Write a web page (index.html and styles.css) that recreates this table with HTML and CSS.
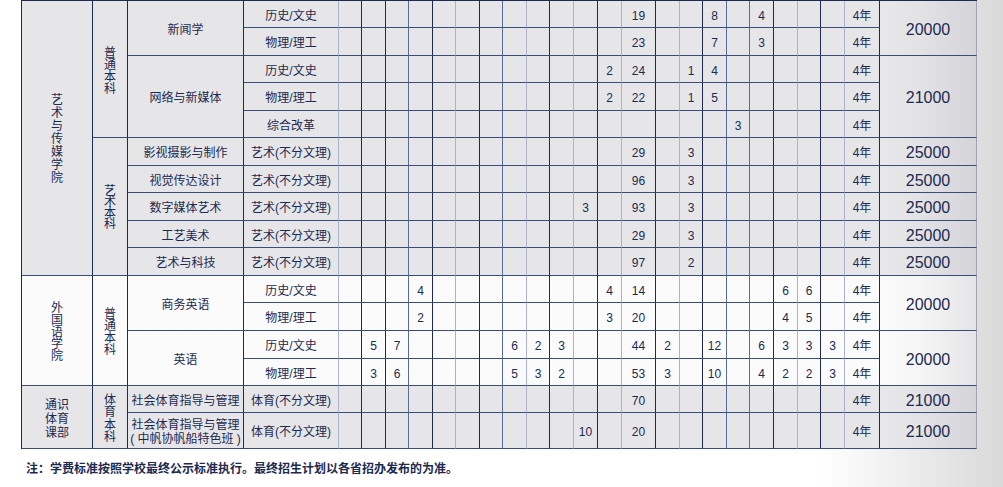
FILE: index.html
```html
<!DOCTYPE html>
<html lang="zh-CN">
<head>
<meta charset="utf-8">
<title>招生计划</title>
<link rel="stylesheet" href="styles.css">
</head>
<body>
<div class="page">
  <div class="sec s1">
    <!-- R1 -->
    <div class="c rs10"><span class="vt v13">艺术与传媒学院</span></div>
    <div class="c rs5"><span class="vt v12">普通本科</span></div>
    <div class="c rs2">新闻学</div>
    <div class="c l">历史/文史</div>
    <div class="c"></div><div class="c"></div><div class="c m"></div><div class="c"></div><div class="c l"></div><div class="c"></div><div class="c m"></div><div class="c l"></div><div class="c"></div><div class="c l"></div><div class="c"></div><div class="c l"></div><div class="c">19</div><div class="c l"></div><div class="c"></div><div class="c m">8</div><div class="c m"></div><div class="c">4</div><div class="c l"></div><div class="c"></div><div class="c l"></div><div class="c">4年</div>
    <div class="c t rs2">20000</div>
    <!-- R2 -->
    <div class="c l">物理/理工</div>
    <div class="c"></div><div class="c"></div><div class="c m"></div><div class="c"></div><div class="c l"></div><div class="c"></div><div class="c m"></div><div class="c l"></div><div class="c"></div><div class="c l"></div><div class="c"></div><div class="c l"></div><div class="c">23</div><div class="c l"></div><div class="c"></div><div class="c m">7</div><div class="c m"></div><div class="c">3</div><div class="c l"></div><div class="c"></div><div class="c l"></div><div class="c">4年</div>
    <!-- R3 -->
    <div class="c rs3">网络与新媒体</div>
    <div class="c l">历史/文史</div>
    <div class="c"></div><div class="c"></div><div class="c m"></div><div class="c"></div><div class="c l"></div><div class="c"></div><div class="c m"></div><div class="c l"></div><div class="c"></div><div class="c l"></div><div class="c"></div><div class="c l">2</div><div class="c">24</div><div class="c l"></div><div class="c">1</div><div class="c m">4</div><div class="c m"></div><div class="c"></div><div class="c l"></div><div class="c"></div><div class="c l"></div><div class="c">4年</div>
    <div class="c t rs3">21000</div>
    <!-- R4 -->
    <div class="c l">物理/理工</div>
    <div class="c"></div><div class="c"></div><div class="c m"></div><div class="c"></div><div class="c l"></div><div class="c"></div><div class="c m"></div><div class="c l"></div><div class="c"></div><div class="c l"></div><div class="c"></div><div class="c l">2</div><div class="c">22</div><div class="c l"></div><div class="c">1</div><div class="c m">5</div><div class="c m"></div><div class="c"></div><div class="c l"></div><div class="c"></div><div class="c l"></div><div class="c">4年</div>
    <!-- R5 -->
    <div class="c l">综合改革</div>
    <div class="c"></div><div class="c"></div><div class="c m"></div><div class="c"></div><div class="c l"></div><div class="c"></div><div class="c m"></div><div class="c l"></div><div class="c"></div><div class="c l"></div><div class="c"></div><div class="c l"></div><div class="c"></div><div class="c l"></div><div class="c"></div><div class="c m"></div><div class="c m">3</div><div class="c"></div><div class="c l"></div><div class="c"></div><div class="c l"></div><div class="c">4年</div>
    <!-- R6 -->
    <div class="c rs5"><span class="vt v11">艺术本科</span></div>
    <div class="c">影视摄影与制作</div>
    <div class="c l">艺术(不分文理)</div>
    <div class="c"></div><div class="c"></div><div class="c m"></div><div class="c"></div><div class="c l"></div><div class="c"></div><div class="c m"></div><div class="c l"></div><div class="c"></div><div class="c l"></div><div class="c"></div><div class="c l"></div><div class="c">29</div><div class="c l"></div><div class="c">3</div><div class="c m"></div><div class="c m"></div><div class="c"></div><div class="c l"></div><div class="c"></div><div class="c l"></div><div class="c">4年</div>
    <div class="c t">25000</div>
    <!-- R7 -->
    <div class="c">视觉传达设计</div>
    <div class="c l">艺术(不分文理)</div>
    <div class="c"></div><div class="c"></div><div class="c m"></div><div class="c"></div><div class="c l"></div><div class="c"></div><div class="c m"></div><div class="c l"></div><div class="c"></div><div class="c l"></div><div class="c"></div><div class="c l"></div><div class="c">96</div><div class="c l"></div><div class="c">3</div><div class="c m"></div><div class="c m"></div><div class="c"></div><div class="c l"></div><div class="c"></div><div class="c l"></div><div class="c">4年</div>
    <div class="c t">25000</div>
    <!-- R8 -->
    <div class="c">数字媒体艺术</div>
    <div class="c l">艺术(不分文理)</div>
    <div class="c"></div><div class="c"></div><div class="c m"></div><div class="c"></div><div class="c l"></div><div class="c"></div><div class="c m"></div><div class="c l"></div><div class="c"></div><div class="c l"></div><div class="c">3</div><div class="c l"></div><div class="c">93</div><div class="c l"></div><div class="c">3</div><div class="c m"></div><div class="c m"></div><div class="c"></div><div class="c l"></div><div class="c"></div><div class="c l"></div><div class="c">4年</div>
    <div class="c t">25000</div>
    <!-- R9 -->
    <div class="c">工艺美术</div>
    <div class="c l">艺术(不分文理)</div>
    <div class="c"></div><div class="c"></div><div class="c m"></div><div class="c"></div><div class="c l"></div><div class="c"></div><div class="c m"></div><div class="c l"></div><div class="c"></div><div class="c l"></div><div class="c"></div><div class="c l"></div><div class="c">29</div><div class="c l"></div><div class="c">3</div><div class="c m"></div><div class="c m"></div><div class="c"></div><div class="c l"></div><div class="c"></div><div class="c l"></div><div class="c">4年</div>
    <div class="c t">25000</div>
    <!-- R10 -->
    <div class="c">艺术与科技</div>
    <div class="c l">艺术(不分文理)</div>
    <div class="c"></div><div class="c"></div><div class="c m"></div><div class="c"></div><div class="c l"></div><div class="c"></div><div class="c m"></div><div class="c l"></div><div class="c"></div><div class="c l"></div><div class="c"></div><div class="c l"></div><div class="c">97</div><div class="c l"></div><div class="c">2</div><div class="c m"></div><div class="c m"></div><div class="c"></div><div class="c l"></div><div class="c"></div><div class="c l"></div><div class="c">4年</div>
    <div class="c t">25000</div>
  </div>

  <div class="sec s2">
    <!-- R11 -->
    <div class="c rs4"><span class="vt v12">外国语学院</span></div>
    <div class="c rs4"><span class="vt v12">普通本科</span></div>
    <div class="c rs2">商务英语</div>
    <div class="c l">历史/文史</div>
    <div class="c"></div><div class="c"></div><div class="c m"></div><div class="c">4</div><div class="c l"></div><div class="c"></div><div class="c m"></div><div class="c l"></div><div class="c"></div><div class="c l"></div><div class="c"></div><div class="c l">4</div><div class="c">14</div><div class="c l"></div><div class="c"></div><div class="c m"></div><div class="c m"></div><div class="c"></div><div class="c l">6</div><div class="c">6</div><div class="c l"></div><div class="c">4年</div>
    <div class="c t rs2">20000</div>
    <!-- R12 -->
    <div class="c l">物理/理工</div>
    <div class="c"></div><div class="c"></div><div class="c m"></div><div class="c">2</div><div class="c l"></div><div class="c"></div><div class="c m"></div><div class="c l"></div><div class="c"></div><div class="c l"></div><div class="c"></div><div class="c l">3</div><div class="c">20</div><div class="c l"></div><div class="c"></div><div class="c m"></div><div class="c m"></div><div class="c"></div><div class="c l">4</div><div class="c">5</div><div class="c l"></div><div class="c">4年</div>
    <!-- R13 -->
    <div class="c rs2">英语</div>
    <div class="c l">历史/文史</div>
    <div class="c"></div><div class="c">5</div><div class="c m">7</div><div class="c"></div><div class="c l"></div><div class="c"></div><div class="c m"></div><div class="c l">6</div><div class="c">2</div><div class="c l">3</div><div class="c"></div><div class="c l"></div><div class="c">44</div><div class="c l">2</div><div class="c"></div><div class="c m">12</div><div class="c m"></div><div class="c">6</div><div class="c l">3</div><div class="c">3</div><div class="c l">3</div><div class="c">4年</div>
    <div class="c t rs2">20000</div>
    <!-- R14 -->
    <div class="c l">物理/理工</div>
    <div class="c"></div><div class="c">3</div><div class="c m">6</div><div class="c"></div><div class="c l"></div><div class="c"></div><div class="c m"></div><div class="c l">5</div><div class="c">3</div><div class="c l">2</div><div class="c"></div><div class="c l"></div><div class="c">53</div><div class="c l">3</div><div class="c"></div><div class="c m">10</div><div class="c m"></div><div class="c">4</div><div class="c l">2</div><div class="c">2</div><div class="c l">3</div><div class="c">4年</div>
  </div>

  <div class="sec s3">
    <!-- R15 -->
    <div class="c rs2"><span class="vt v2">通识体育课部</span></div>
    <div class="c rs2"><span class="vt v12b">体育本科</span></div>
    <div class="c">社会体育指导与管理</div>
    <div class="c l">体育(不分文理)</div>
    <div class="c"></div><div class="c"></div><div class="c m"></div><div class="c"></div><div class="c l"></div><div class="c"></div><div class="c m"></div><div class="c l"></div><div class="c"></div><div class="c l"></div><div class="c"></div><div class="c l"></div><div class="c">70</div><div class="c l"></div><div class="c"></div><div class="c m"></div><div class="c m"></div><div class="c"></div><div class="c l"></div><div class="c"></div><div class="c l"></div><div class="c">4年</div>
    <div class="c t">21000</div>
    <!-- R16 -->
    <div class="c">社会体育指导与管理<br>( 中帆协帆船特色班 )</div>
    <div class="c l">体育(不分文理)</div>
    <div class="c"></div><div class="c"></div><div class="c m"></div><div class="c"></div><div class="c l"></div><div class="c"></div><div class="c m"></div><div class="c l"></div><div class="c"></div><div class="c l"></div><div class="c">10</div><div class="c l"></div><div class="c">20</div><div class="c l"></div><div class="c"></div><div class="c m"></div><div class="c m"></div><div class="c"></div><div class="c l"></div><div class="c"></div><div class="c l"></div><div class="c">4年</div>
    <div class="c t">21000</div>
  </div>

  <p class="note">注：学费标准按照学校最终公示标准执行。最终招生计划以各省招办发布的为准。</p>
</div>
</body>
</html>
```

FILE: styles.css
```css
html, body {
  margin: 0;
  padding: 0;
}

body {
  width: 1003px;
  height: 487px;
  overflow: hidden;
  background: linear-gradient(to right, #ffffff 0, #ffffff 820px, #efefef 900px, #d9d9d9 1003px);
  font-family: "Liberation Sans", "Noto Sans CJK SC", sans-serif;
  color: #1c2a50;
}

.page {
  padding-left: 21px;
}

.sec {
  display: grid;
  grid-template-columns:
    71px 35px 116px 95px
    23px 24px 23px 24px 23px 24px 23px 24px 23px 24px 24px 24px
    34px
    24px 23px 24px 23px 24px 24px 23px 24px
    35px 97px;
  width: max-content;
  border-left: 1px solid #1d2a52;
}

.s1 {
  border-top: 1px solid #1d2a52;
  grid-template-rows: 27px 28px 27px 28px 27px 28px 27px 28px 27px 28px;
  background: #e6e6e9;
}

.s2 {
  grid-template-rows: 27px 28px 28px 27px;
  background: #fbfbfb;
}

.s3 {
  grid-template-rows: 27px 36px;
  background: #e6e6e9;
}

.c {
  box-sizing: border-box;
  padding-top: 3px;
  border-right: 1px solid #1d2a52;
  border-bottom: 1px solid #3a4c7c;
  display: flex;
  align-items: center;
  justify-content: center;
  font-size: 12px;
  line-height: 14px;
  text-align: center;
  white-space: nowrap;
}

.c.l {
  border-right-color: #a9b3cc;
}

.c.m {
  border-right-color: #5a6c9a;
}

.rs2 { grid-row: span 2; }
.rs3 { grid-row: span 3; }
.rs4 { grid-row: span 4; }
.rs5 { grid-row: span 5; }
.rs10 { grid-row: span 10; }

.t {
  font-size: 16px;
  background: linear-gradient(to right, #e8e8eb 0, #e3e3e6 40%, #d4d4d9 100%);
  border-right-color: #9ea4b4;
}

.s2 .t {
  background: linear-gradient(to right, #fbfbfb 0, #f6f6f6 40%, #e5e5e7 100%);
}

.vt {
  display: block;
  width: 12px;
  white-space: normal;
  word-break: break-all;
  line-height: 12px;
}

.v13 { line-height: 13px; }
.v12 { line-height: 12px; }
.v12b { line-height: 12.5px; }
.v11 { line-height: 11px; }

.v2 {
  width: 24px;
  line-height: 14px;
}

.note {
  margin: 13px 0 0 5px;
  font-size: 12px;
  font-weight: bold;
  line-height: 14px;
}
```
